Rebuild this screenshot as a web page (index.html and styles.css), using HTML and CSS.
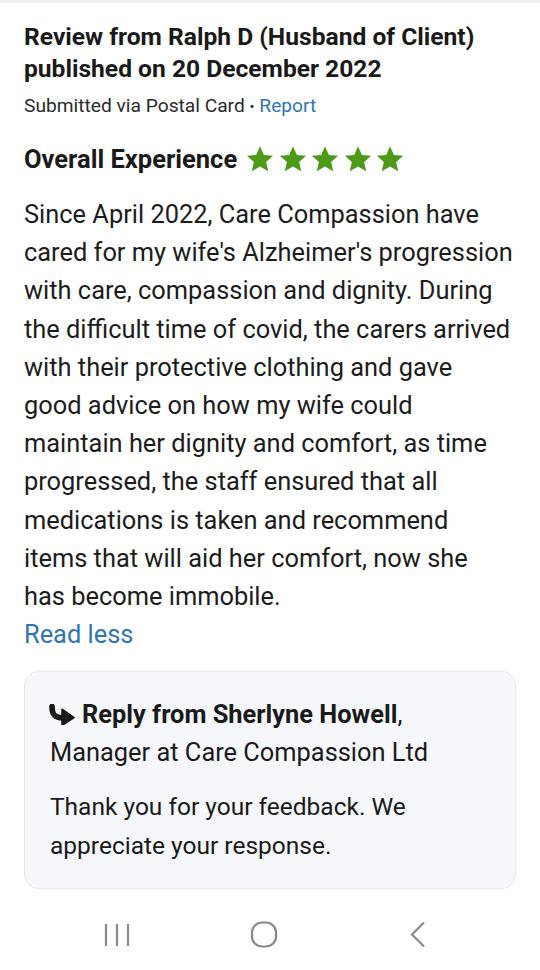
FILE: index.html
```html
<!DOCTYPE html>
<html>
<head>
<meta charset="utf-8">
<link rel="stylesheet" href="styles.css">
</head>
<body>
<div class="topline"></div>
<main class="review">
  <h1 class="title">Review from Ralph D (Husband of Client) published on 20 December 2022</h1>
  <p class="meta">Submitted via Postal Card <span class="dot">•</span> <a class="link">Report</a></p>
  <div class="overall">
    <span class="overall-label">Overall Experience</span>
    <span class="stars">
      <svg class="star" viewBox="0 0 24 24"><path d="M12 1.8l3.1 6.9 7.4.7-5.6 5 1.7 7.4L12 17.9l-6.6 3.9 1.7-7.4-5.6-5 7.4-.7z"/></svg>
      <svg class="star" viewBox="0 0 24 24"><path d="M12 1.8l3.1 6.9 7.4.7-5.6 5 1.7 7.4L12 17.9l-6.6 3.9 1.7-7.4-5.6-5 7.4-.7z"/></svg>
      <svg class="star" viewBox="0 0 24 24"><path d="M12 1.8l3.1 6.9 7.4.7-5.6 5 1.7 7.4L12 17.9l-6.6 3.9 1.7-7.4-5.6-5 7.4-.7z"/></svg>
      <svg class="star" viewBox="0 0 24 24"><path d="M12 1.8l3.1 6.9 7.4.7-5.6 5 1.7 7.4L12 17.9l-6.6 3.9 1.7-7.4-5.6-5 7.4-.7z"/></svg>
      <svg class="star" viewBox="0 0 24 24"><path d="M12 1.8l3.1 6.9 7.4.7-5.6 5 1.7 7.4L12 17.9l-6.6 3.9 1.7-7.4-5.6-5 7.4-.7z"/></svg>
    </span>
  </div>
  <p class="body">Since April 2022, Care Compassion have cared for my wife's Alzheimer's progression with care, compassion and dignity. During the difficult time of covid, the carers arrived with their protective clothing and gave good advice on how my wife could maintain her dignity and comfort, as time progressed, the staff ensured that all medications is taken and recommend items that will aid her comfort, now she has become immobile.</p>
  <a class="readless">Read less</a>
  <section class="reply">
    <p class="reply-head"><svg class="reply-icon" viewBox="0 0 26 20"><path d="M3.5 2.5C3.5 10 6 13 13.5 13" stroke="#1a1a1a" stroke-width="5.5" fill="none" stroke-linecap="round"/><path d="M13 5L24.5 13 13 20.5z" fill="#1a1a1a" stroke="#1a1a1a" stroke-width="1.5" stroke-linejoin="round"/></svg><strong>Reply from Sherlyne Howell</strong>,<br>Manager at Care Compassion Ltd</p>
    <p class="reply-body">Thank you for your feedback. We appreciate your response.</p>
  </section>
</main>
<nav class="navbar">
  <svg class="nav-icon nav-recent" width="30" height="30" viewBox="0 0 30 30"><path d="M4 4v22M15 4v22M26 4v22" stroke="#8a8a8a" stroke-width="2.2" fill="none"/></svg>
  <svg class="nav-icon nav-home" width="30" height="30" viewBox="0 0 30 30"><rect x="3" y="2.5" width="24" height="24" rx="10" stroke="#8a8a8a" stroke-width="2.2" fill="none"/></svg>
  <svg class="nav-icon nav-back" width="30" height="30" viewBox="0 0 30 30"><path d="M21 2.5L9 14.5l12 12" stroke="#8a8a8a" stroke-width="2.2" fill="none"/></svg>
</nav>
</body>
</html>
```
FILE: styles.css
```css
* { box-sizing: border-box; }
html, body {
  margin: 0;
  padding: 0;
  background: #ffffff;
}
body {
  font-family: Roboto, "Liberation Sans", sans-serif;
  color: #1a1a1a;
  width: 540px;
  height: 970px;
  overflow: hidden;
}
.topline {
  height: 3px;
  background: #eeeeee;
}
.review {
  padding: 18px 24px 0 24px;
}
.title {
  margin: 0;
  font-size: 24.6px;
  line-height: 32px;
  font-weight: 700;
  color: #1a1a1a;
}
.meta {
  margin: 9px 0 0 0;
  font-size: 19.2px;
  line-height: 24px;
  color: #2a2a2a;
}
.dot { font-size: 15px; }
.link {
  color: #2f75b5;
}
.overall {
  display: flex;
  align-items: center;
  margin-top: 24px;
  height: 32px;
}
.overall-label {
  font-size: 25.5px;
  font-weight: 700;
  line-height: 32px;
}
.stars {
  display: flex;
  gap: 2.5px;
  margin-left: 8px;
}
.star {
  width: 30px;
  height: 30px;
  fill: #4c9a17;
}
.body {
  margin: 20px 0 0 0;
  max-width: 489px;
  font-size: 25.4px;
  line-height: 38.2px;
  color: #1c1c1c;
}
.readless {
  display: block;
  font-size: 25.4px;
  line-height: 38px;
  color: #2f75b5;
}
.reply {
  margin-top: 18px;
  background: #f5f7fb;
  border: 1px solid #e6e9ef;
  border-radius: 14px;
  padding: 23px 25px 23px 25px;
}
.reply-head {
  margin: 0;
  font-size: 25.4px;
  line-height: 38px;
}
.reply-icon {
  width: 28px;
  height: 21px;
  margin-left: -2px;
  margin-right: 6px;
  vertical-align: -2px;
}
.reply-body {
  margin: 15.5px 0 0 0;
  font-size: 24.5px;
  line-height: 39px;
}
.navbar {
  display: flex;
  align-items: center;
  margin-top: 31px;
  padding-left: 102px;
  height: 30px;
}
.nav-home { margin-left: 117px; }
.nav-back { margin-left: 124px; }
```
